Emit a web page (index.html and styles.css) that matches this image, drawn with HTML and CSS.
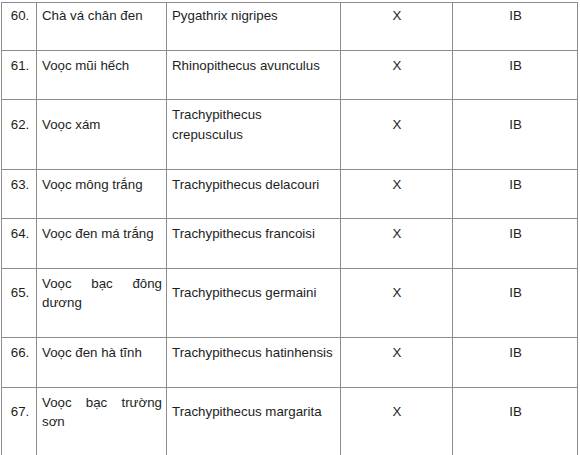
FILE: index.html
```html
<!DOCTYPE html>
<html lang="vi">
<head>
<meta charset="utf-8">
<title>Danh sách loài</title>
<link rel="stylesheet" href="styles.css">
</head>
<body>
<table class="species">
  <colgroup>
    <col class="c-num">
    <col class="c-name">
    <col class="c-sci">
    <col class="c-x">
    <col class="c-ib">
  </colgroup>
  <tbody>
    <tr class="first">
      <td class="num">60.</td>
      <td class="name">Chà vá chân đen</td>
      <td class="sci">Pygathrix nigripes</td>
      <td class="mark">X</td>
      <td class="mark">IB</td>
    </tr>
    <tr>
      <td class="num">61.</td>
      <td class="name">Voọc mũi hếch</td>
      <td class="sci">Rhinopithecus avunculus</td>
      <td class="mark">X</td>
      <td class="mark">IB</td>
    </tr>
    <tr>
      <td class="num mid">62.</td>
      <td class="name mid">Voọc xám</td>
      <td class="sci">Trachypithecus crepusculus</td>
      <td class="mark mid">X</td>
      <td class="mark mid">IB</td>
    </tr>
    <tr>
      <td class="num">63.</td>
      <td class="name">Voọc mông trắng</td>
      <td class="sci">Trachypithecus delacouri</td>
      <td class="mark">X</td>
      <td class="mark">IB</td>
    </tr>
    <tr>
      <td class="num">64.</td>
      <td class="name">Voọc đen má trắng</td>
      <td class="sci">Trachypithecus francoisi</td>
      <td class="mark">X</td>
      <td class="mark">IB</td>
    </tr>
    <tr>
      <td class="num mid">65.</td>
      <td class="name">Voọc bạc đông dương</td>
      <td class="sci mid">Trachypithecus germaini</td>
      <td class="mark mid">X</td>
      <td class="mark mid">IB</td>
    </tr>
    <tr>
      <td class="num">66.</td>
      <td class="name">Voọc đen hà tĩnh</td>
      <td class="sci">Trachypithecus hatinhensis</td>
      <td class="mark">X</td>
      <td class="mark">IB</td>
    </tr>
    <tr>
      <td class="num mid">67.</td>
      <td class="name">Voọc bạc trường sơn</td>
      <td class="sci mid">Trachypithecus margarita</td>
      <td class="mark mid">X</td>
      <td class="mark mid">IB</td>
    </tr>
  </tbody>
</table>
</body>
</html>
```

FILE: styles.css
```css
html, body {
  margin: 0;
  padding: 0;
  background: #ffffff;
}

body {
  font-family: "Liberation Sans", Arial, sans-serif;
  font-size: 13.3px;
  line-height: 19.5px;
  color: #1e1e1e;
  overflow: hidden;
}

.species {
  border-collapse: collapse;
  table-layout: fixed;
  width: 577px;
  margin: 2px 0 0 1px;
}

.c-num  { width: 35px; }
.c-name { width: 130px; }
.c-sci  { width: 174px; }
.c-x    { width: 112px; }
.c-ib   { width: 125px; }

.species td {
  border: 1px solid #8c8c8c;
  padding: 5px 4px 24px 5px;
  vertical-align: top;
  text-align: left;
}

.species tr.first td {
  padding-top: 3px;
}

.species td.num {
  text-align: center;
  padding-left: 2px;
  padding-right: 0;
}

.species td.name {
  text-align: justify;
}

.species td.mark {
  text-align: center;
}

.species td.mid {
  padding-top: 14.75px;
  padding-bottom: 34.25px;
}
```
